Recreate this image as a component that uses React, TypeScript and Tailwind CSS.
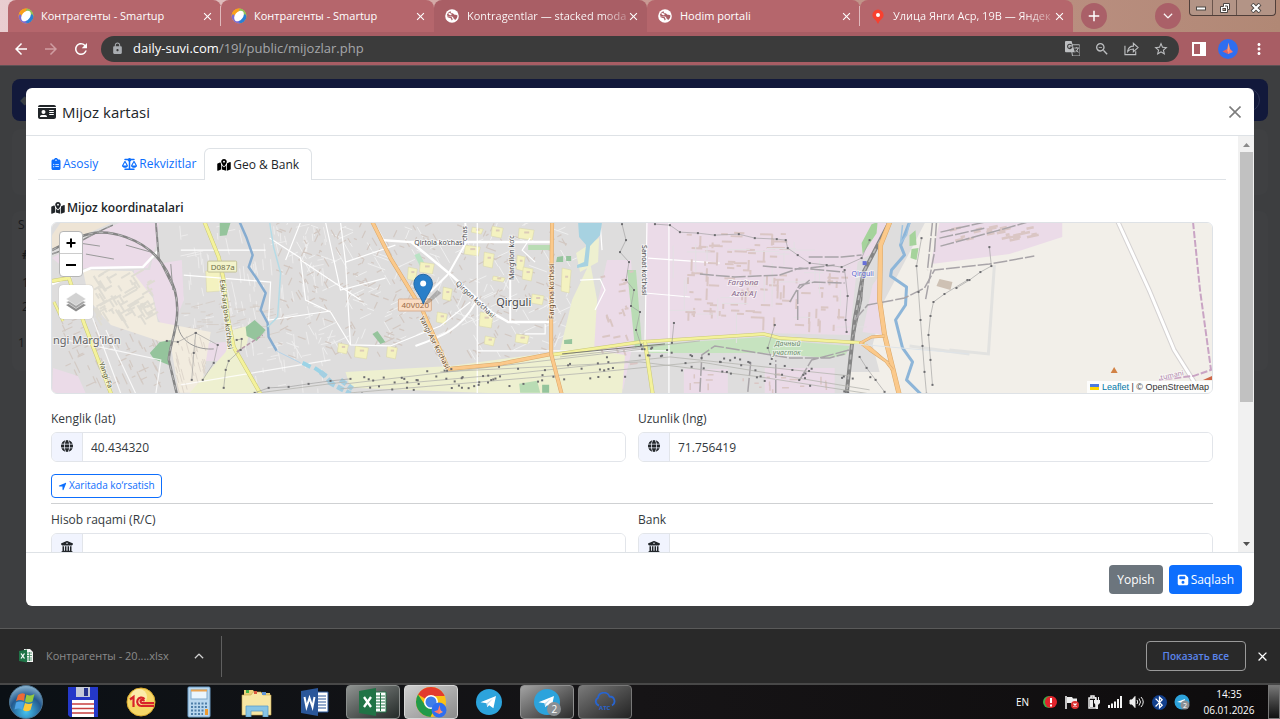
import React from "react";
import {
  FaIdCard, FaClipboardList, FaScaleBalanced, FaMapLocationDot, FaGlobe,
  FaLocationArrow, FaBuildingColumns, FaFloppyDisk,
} from "react-icons/fa6";
import { MdStarBorder, MdZoomOut, MdLock, MdArrowBack, MdArrowForward, MdRefresh, MdMoreVert, MdClose, MdAdd, MdBluetooth } from "react-icons/md";
import { HiChevronDown, HiChevronUp } from "react-icons/hi2";

/* ---------- browser chrome ---------- */

function SmartupIcon() {
  return (
    <svg viewBox="0 0 16 16" className="size-4 shrink-0" aria-hidden="true">
      <circle cx="8" cy="8" r="7.5" fill="#f3a43a" />
      <path d="M8 .5A7.5 7.5 0 0 0 .5 8l4 4L10 1z" fill="#f9a01b" />
      <path d="M9 .6a7.5 7.5 0 0 1 6.5 7.4l-3 2L8 2z" fill="#8fc25a" />
      <path d="M15.5 8A7.5 7.5 0 0 1 8 15.500L6 12l8-6z" fill="#2c7fd4" />
      <path d="M.5 8A7.500 7.500 0 0 0 9 15.400L7 11 2 6z" fill="#7d6cd0" />
      <ellipse cx="8" cy="8" rx="4" ry="6" transform="rotate(38 8 8)" fill="#fff" />
    </svg>
  );
}

function EarthIcon() {
  return (
    <svg viewBox="0 0 16 16" className="size-4 shrink-0" aria-hidden="true">
      <circle cx="8" cy="8" r="6.800" fill="#fff" />
      <path d="M6.800 3.200c-.3 1.200.2 1.900 1.500 2 1.400.1 1.300 1.600 2.600 1.500 1.100-.1 1.900.1 2.600.9-.1 2-1 3.600-2.600 4.600-.1-1.100-.6-1.500-1.400-1.600-.1-1.500-1-2.100-2.500-2-1.700.1-3-.3-4.200-1.300.5-2 1.900-3.600 4-4.100z" fill="#a95e65" />
      <path d="M3.500 8.500c1.500 1 2.500.8 3.500 1.200 1 .5.500 1.500 1.300 2.300" fill="none" stroke="#a95e65" strokeWidth="1.300" />
      <path d="M4.800 5.300c.8 1.100 1.700.9 2.700 1.200" fill="none" stroke="#fff" strokeWidth="1.800" />
    </svg>
  );
}

function PinIcon() {
  return (
    <svg viewBox="0 0 16 16" className="size-4 shrink-0" aria-hidden="true">
      <path d="M8 1.500a5.600 5.600 0 0 0-5.600 5.600c0 3.900 4.100 4.500 5.100 8.400h1c1-3.900 5.100-4.500 5.100-8.400A5.600 5.600 0 0 0 8 1.500z" fill="#f8402f" />
      <circle cx="8" cy="7" r="2" fill="#fff" />
    </svg>
  );
}

const tabs = [
  { title: "Контрагенты - Smartup", icon: <SmartupIcon />, active: false, line: true, faded: false },
  { title: "Контрагенты - Smartup", icon: <SmartupIcon />, active: false, line: false, faded: false },
  { title: "Kontragentlar — stacked moda", icon: <EarthIcon />, active: true, line: false, faded: true },
  { title: "Hodim portali", icon: <EarthIcon />, active: false, line: true, faded: false },
  { title: "Улица Янги Аср, 19В — Яндек", icon: <PinIcon />, active: false, line: false, faded: true },
];

function TabStrip() {
  return (
    <div className="flex h-8 shrink-0 items-start bg-linear-to-r from-[#e9cdd0] via-[#c99a94] to-[#b18875] pl-2">
      <div className="flex h-8 min-w-0 flex-1 text-[11px] text-white">
        {tabs.map((t, i) => (
          <div
            key={i}
            className={
              "flex h-8 max-w-[213px] min-w-0 flex-1 items-center rounded-t-lg pl-[10px] " +
              (t.active ? "bg-[#a95e65]" : "bg-[#b5666c]")
            }
          >
            {t.icon}
            <span className="ml-[7px] flex min-w-0 flex-1">
              <span className={"whitespace-nowrap " + (t.faded ? "bg-linear-to-r from-white from-85% to-white/30 bg-clip-text text-transparent" : "")}>{t.title}</span>
            </span>
            <button aria-label="Закрыть вкладку" className="flex size-4 items-center justify-center">
              <MdClose className="size-[13px]" />
            </button>
            <span className={"ml-[5px] h-5 w-px " + (t.line ? "bg-[#e0b9bc]" : "bg-transparent")} />
          </div>
        ))}
        <button aria-label="Новая вкладка" className="mt-[3px] ml-2 flex size-[26px] shrink-0 items-center justify-center rounded-full bg-[#aa6068]">
          <MdAdd className="size-[18px]" />
        </button>
      </div>
      <div className="flex h-8 items-start pr-1 text-white">
        <button aria-label="Поиск вкладок" className="mt-[3px] mr-2 flex size-[26px] items-center justify-center rounded-full bg-[#aa6068]">
          <HiChevronDown className="size-3" strokeWidth={1} />
        </button>
        <div className="flex h-4 rounded-b border border-t-0 border-[#503f3a] bg-[#b39486]">
          <button aria-label="Свернуть" className="flex w-[23px] items-center justify-center border-r border-[#6a544c]">
            <svg viewBox="0 0 12 10" className="h-[10px] w-3"><rect x="1.500" y="4" width="9" height="3" fill="#fff" stroke="#4b4643" /></svg>
          </button>
          <button aria-label="Развернуть" className="flex w-6 items-center justify-center border-r border-[#6a544c]">
            <svg viewBox="0 0 12 12" className="size-3" fill="none">
              <path d="M4.500 1.500h6v6h-2v3h-7v-6h3z" fill="#fff" stroke="#4b4643" /><rect x="4" y="6.500" width="2.500" height="2" fill="#b39486" stroke="#4b4643" /><path d="M6 4h2.500v3" stroke="#4b4643" />
            </svg>
          </button>
          <button aria-label="Закрыть" className="flex w-[38px] items-center justify-center">
            <svg viewBox="0 0 12 10" className="h-[10px] w-3" fill="none"><path d="M2 1l8 8M10 1l-8 8" stroke="#4b4643" strokeWidth="4" /><path d="M2.500 1.500l7 7M9.500 1.500l-7 7" stroke="#fff" strokeWidth="2.200" /></svg>
          </button>
        </div>
      </div>
    </div>
  );
}

function Toolbar() {
  return (
    <div className="flex h-[34px] shrink-0 items-center border-b border-[#5e5255] bg-[#a85d64] pl-3 text-white">
      <div className="flex items-center gap-3">
        <button aria-label="Назад"><MdArrowBack className="size-[18px]" /></button>
        <button aria-label="Вперёд" className="text-[#cf9da1]"><MdArrowForward className="size-[18px]" /></button>
        <button aria-label="Обновить"><MdRefresh className="size-[18px]" /></button>
      </div>
      <div className="ml-[11px] flex h-[26px] min-w-0 flex-1 items-center rounded-full bg-[#3b3b3b] px-[10px]">
        <MdLock className="size-[13px] shrink-0 text-[#a9adb1]" />
        <div className="ml-[9px] flex-1 truncate text-[13px] text-[#a5a7aa]">
          <span className="text-white">daily-suvi.com</span>/19l/public/mijozlar.php
        </div>
        <div className="flex items-center gap-[14px] text-[#bdbfc1]">
          <button aria-label="Перевести">
            <svg viewBox="0 0 16 16" className="size-[15px]">
              <path d="M6 4h9a1 1 0 0 1 1 1v10a1 1 0 0 1-1 1H8z" fill="none" stroke="currentColor" />
              <path d="M1 0h6l3.500 12H1a1 1 0 0 1-1-1V1a1 1 0 0 1 1-1z" fill="currentColor" />
              <path d="M7 4.500a2.300 2.300 0 1 0 .3 2H5" fill="none" stroke="#3b3b3b" strokeWidth="1.200" />
              <path d="M10 7.500h5M12.500 6.500v1M14 7.500c-.5 2-1.500 3.500-3 4.500M11.500 9.500c.8 1.200 1.700 2 3 2.500" fill="none" stroke="currentColor" />
            </svg>
          </button>
          <button aria-label="Масштаб"><MdZoomOut className="size-4" /></button>
          <button aria-label="Поделиться">
            <svg viewBox="0 0 16 16" className="size-[15px]" fill="none" stroke="currentColor" strokeWidth="1.200">
              <path d="M1 5v9.500h11.500V11" /><path d="M4 11c.5-4 2.500-5.500 6-5.500V2.500L15 7l-5 4.500v-3C7.500 8.500 5.500 9 4 11z" />
            </svg>
          </button>
          <button aria-label="Закладка"><MdStarBorder className="size-4" /></button>
        </div>
      </div>
      <div className="flex items-center gap-3 pr-3 pl-[13px]">
        <button aria-label="Боковая панель">
          <svg viewBox="0 0 14 14" className="size-[14px]"><rect width="14" height="14" fill="#fff" /><rect x="2" y="2" width="6" height="10" fill="#a85d64" /></svg>
        </button>
        <button aria-label="Профиль"><Avatar className="size-5" /></button>
        <button aria-label="Меню"><MdMoreVert className="size-[18px]" /></button>
      </div>
    </div>
  );
}

function Avatar({ className }: { className: string }) {
  return (
    <svg viewBox="0 0 20 20" className={className} aria-hidden="true">
      <circle cx="10" cy="10" r="10" fill="#2f6ef0" />
      <path d="M10.500 3.500l2 9-2 2.500-1.500-3z" fill="#ff9a70" />
      <path d="M10 15L4.500 12.500 9 10z" fill="#e8605a" />
      <path d="M10 15l5-2-3.500-3.500z" fill="#ff7a66" />
    </svg>
  );
}

/* ---------- map ---------- */

function seeded(seed: number) {
  let s = seed;
  return () => {
    s = (s * 16807) % 2147483647;
    return s / 2147483647;
  };
}

function strokes(seed: number, n: number, x: number, y: number, w: number, h: number, angles: number[], len: number) {
  const r = seeded(seed);
  let d = "";
  for (let i = 0; i < n; i++) {
    const a = (angles[Math.floor(r() * angles.length)] * Math.PI) / 180;
    const l = len * (0.4 + r());
    const px = x + r() * w;
    const py = y + r() * h;
    d += `M${px.toFixed(1)} ${py.toFixed(1)}l${(Math.cos(a) * l).toFixed(1)} ${(Math.sin(a) * l).toFixed(1)}`;
  }
  return d;
}

function Pylons({ pts }: { pts: string }) {
  return (
    <g>
      <polyline points={pts} fill="none" stroke="#9b9b9b" strokeWidth=".6" />
      {pts.split(" ").map((p, i) => {
        const [x, y] = p.split(",").map(Number);
        return <rect key={i} x={x - 1} y={y - 1} width="2" height="2" fill="#6d6d70" />;
      })}
    </g>
  );
}

function Rail({ d, w = 2 }: { d: string; w?: number }) {
  return (
    <g fill="none">
      <path d={d} stroke="#858585" strokeWidth={w} />
      <path d={d} stroke="#b9b9b9" strokeWidth={w * 0.4} strokeDasharray="5 5" />
    </g>
  );
}

function Road({ d, w, c, k }: { d: string; w: number; c: string; k: string }) {
  return (
    <g fill="none" strokeLinejoin="round">
      <path d={d} stroke={k} strokeWidth={w + 1} />
      <path d={d} stroke={c} strokeWidth={w} />
    </g>
  );
}

function yardPylons() {
  const r = seeded(4211);
  return Array.from({ length: 120 }, () => {
    const x = 350 + r() * 530;
    const base = x < 640 ? 386 - (x - 350) * 0.08 : 353 + (x - 640) * 0.14;
    return [x, base + r() * 22 - 10];
  });
}

function MapArt() {
  const yellow = { c: "#f4f29b", k: "#c9c878" };
  const orange = { c: "#fbc98b", k: "#d9a769" };
  const blocks: [number, number, number, number][] = [
    [408, 267, 9, 12], [420, 262, 14, 10], [443, 287, 9, 12], [437, 312, 10, 10], [480, 312, 13, 14], [485, 336, 10, 8],
    [516, 334, 13, 8], [355, 346, 13, 11], [338, 343, 10, 9], [387, 346, 10, 11], [465, 245, 15, 9], [484, 252, 10, 14],
    [519, 228, 15, 10], [517, 255, 8, 14], [523, 267, 10, 12], [532, 294, 12, 9], [562, 268, 9, 23], [492, 226, 11, 10],
    [472, 227, 11, 5], [493, 276, 12, 4],
  ];
  return (
    <svg viewBox="51 222 1162 172" preserveAspectRatio="xMidYMid slice" className="h-full w-full" role="img" aria-label="Xarita" fontFamily="Noto Sans, sans-serif">
      <rect x="40" y="210" width="1190" height="200" fill="#f2efe9" />
      <path d="M40 210H932L905 262 885 300 873 345 880 372 850 372 850 400H40z" fill="#dedddd" />

      {/* residential texture */}
      <g fill="none">
        <path d={strokes(11, 150, 178, 224, 150, 165, [-12, 78, 85], 12)} stroke="#edecec" />
        <path d={strokes(7, 170, 285, 224, 300, 130, [20, -68, 60, -25], 15)} stroke="#efefef" />
        <path d={strokes(3, 260, 275, 224, 290, 132, [20, -65, 60, -28], 7)} stroke="#d2c8c2" strokeWidth="1.200" />
        <path d={strokes(5, 80, 60, 320, 100, 70, [65, -25], 9)} stroke="#d3cac4" strokeWidth="1.200" />
        <path d={strokes(9, 50, 180, 300, 90, 40, [0, -15], 9)} stroke="#d6cfca" />
      </g>

      {/* industrial areas */}
      <g fill="#ebdbe8">
        <path d="M51 258L85 238 120 222H158L156 244 147 268 120 267 85 268 68 272z" />
        <path d="M152 258L163 263 181 260 183 300 176 318 176 337 168 338 157 318 148 275z" />
        <path d="M133 270h18v23h-18zM197 344l28-2 3 19h-28zM52 368l25 8 8 18H51z" />
        <path d="M607 260h24l5 70-13 60-28-32-5-22z" />
        <path d="M646 222H892L878 250 858 262 850 335 765 333 720 337 646 344z" />
        <path d="M684 369h44v25h-44zM765 368h70v26h-70z" />
        <path d="M873 285l-10 47 22 3-5-60z" />
        <path d="M932 260L940 222H1063V237L1010 254 932 264z" />
      </g>
      <path d="M82 270L131 271 152 298 157 322 210 332 200 393H178L170 345 110 325 88 300z" fill="#f2ecdf" />
      <path d={strokes(21, 70, 92, 275, 55, 45, [58, -30], 11)} stroke="#dfdcd3" strokeWidth="2" fill="none" />
      <path d={strokes(22, 35, 175, 335, 30, 52, [75], 10)} stroke="#ded6cc" fill="none" />
      <path d="M51 235L60 222H112L85 234 51 249z" fill="#eee4d5" />

      {/* fields and greenery */}
      <g fill="#eef0d0">
        <path d="M188 394L225 352 232 330 250 325 246 345 236 352 262 394z" />
        <path d="M345 372L450 366 555 352 600 351 625 355 622 394 510 394 350 388z" />
        <path d="M576 253L599 238 598 262 580 272zM572 300L590 262 597 300 594 350 560 350z" />
      </g>
      <g fill="#b9dcb4">
        <path d="M627 270l9 0 6 75-7 3z" />
        <path d="M642 345L764 337 800 342 850 346 846 355 830 358 764 353 645 353z" fill="#c6e3bf" />
        <path d="M528 245h22v5h-22zM519 384l18-3 3 12h-20z" />
      </g>
      <g fill="#95c49c">
        <path d="M219 222h11l-4 13-7 1zM245 327l9-7 11 10-9 11-10-5zM149 353l10-11 11-2-2 25-15-6z" />
        <path d="M372 334l5-3 8 11-5 2zM494 229l7-1v7l-7 1zM557 257l6-1v6h-7zM566 256h5v5h-5zM542 385h7v8h-7zM564 340l8-1v5h-8z" />
        <path d="M872 224L878 222 877 233 863 254 862 243zM910 235l6-5 1 15-7 1zM912 249l7-1-2 12-6-2z" fill="#a5d39b" />
      </g>
      <path d="M414 255l5-2 8 16-5 2z" fill="#b9e3c4" />
      <g fill="#f4f2c0" stroke="#d6d4a8" strokeWidth=".5">
        {blocks.map(([x, y, w, h], i) => (
          <path key={i} d={`M${x} ${y}l${w} 2l-2 ${h}l${-w + 1} -2z`} />
        ))}
        <path d="M205 271h14l1 20-14 1z" />
      </g>
      <g fill="#dccbb9">
        {blocks.map(([x, y, w, h], i) => (
          <rect key={i} x={x + w / 3} y={y + h / 3} width={w / 3} height="2" />
        ))}
      </g>

      {/* streets */}
      <g fill="none" stroke="#fff" strokeWidth="1.200">
        <path d="M51 284L90 268 142 267 158 250" strokeWidth="2.500" />
        <path d="M269 238L300 258 305 300 330 312 350 345 390 346 440 326 470 302" />
        <path d="M380 240L411 242 452 276 491 312 508 322 549 322M411 242H550" strokeWidth="2.500" />
        <path d="M448 274L430 292M475 303C460 330 440 337 415 346" strokeWidth="2" />
        <path d="M510 280V322M465 222L466 242 448 274" strokeWidth="2" />
        <path d="M477 351H670M477 222V394" />
        <path d="M647 222L645 345M669 222V394M648 258L720 263M645 293L690 297" />
        <path d="M340 222L345 262 395 245M345 262L350 345M300 260L360 300M180 250H265M183 275L270 282 268 320 330 311M300 222L285 260M600 222L602 250" />
        <path d="M85 300L120 394M65 340L160 360 155 394M105 330L135 394M180 385L330 360" opacity=".8" />
        <path d="M580 280L600 279 605 290 595 310M325 222L340 290 385 278" />
        <path d="M530 238L522 250 535 262M545 324V334H525" />
      </g>

      {/* waterways */}
      <g fill="none" strokeLinejoin="round">
        <path d="M239 222L246 238 252 255 248 267 257 280 265 293 260 310 267 323 268 337 276 351" stroke="#86acd0" strokeWidth="2.500" />
        <path d="M276 351L300 363" stroke="#b5d3e8" />
        <path d="M269 222L273 247 280 273 277 317 267 327" stroke="#b5dbe6" strokeWidth="1.500" />
        <path d="M302 363l8 4M314 368l12 8" stroke="#9bd3e6" strokeWidth="4" />
        <path d="M320 372l12 12M328 382l22 12M340 380l12 9" stroke="#a4cfe2" strokeWidth="5" strokeDasharray="7 3" />
        <path d="M910 222L901 245 905 255 892 270 891 276 907 287 906 305 896 320 903 348 913 362 907 380 921 394" stroke="#8db5d8" strokeWidth="3" />
        <path d="M903 225l-2 18 6-8 3-12" stroke="#9fc3e0" strokeWidth="1.500" />
      </g>
      <path d="M578 222H602L600 235 590 246 588 266 577 268 577 265 584 262 586 245 579 237z" fill="#a7d2e1" />

      {/* industrial buildings */}
      <g fill="none" stroke="#dac6c4">
        <path d={strokes(31, 90, 685, 232, 100, 90, [2, 2, 92], 10)} strokeWidth="2" />
        <path d={strokes(33, 26, 795, 270, 50, 55, [2, 92], 9)} strokeWidth="2" />
        <path d={strokes(35, 26, 945, 227, 100, 14, [-12], 9)} strokeWidth="2.500" />
        <path d={strokes(36, 20, 600, 265, 32, 100, [70, -10], 6)} strokeWidth="2" />
        <path d={strokes(38, 22, 690, 372, 140, 18, [0, 90], 6)} strokeWidth="1.500" />
      </g>
      <path d="M940 279l13 3-2 8-14-4z" fill="#cec1b4" />
      <path d={strokes(37, 30, 650, 230, 195, 100, [0, 90], 24)} fill="none" stroke="#e3e0e3" />

      {/* railways */}
      <Rail d="M51 250C78 236 95 226 125 237 150 246 165 262 174 290 182 320 168 345 168 360L176 394" w={2.5} />
      <Rail d="M155 222L158 258 174 290" />
      <Rail d="M51 254C70 248 86 236 112 225" w={1.5} />
      <path d="M65 241l34 5M85 254l28 5M125 245l25 7M170 264l2 26M177 325C180 345 200 350 213 349" stroke="#999" fill="none" />
      <Rail d="M890 222L864 272 855 320 847 394" w={4} />
      <Rail d="M864 272L862 300 852 345" w={1.5} />
      <g fill="none" stroke="#a8a4a8" strokeWidth="1.500" strokeDasharray="14 2">
        <path d="M700 274L735 277 780 275 800 268 845 272M763 266L800 269 835 265M809 257H842L862 255M790 302L800 285 815 282 845 283M798 320L798 290 810 280" />
        <path d="M700 392L702 355 715 346 790 358 830 358 845 354M748 392L751 362M776 394V360M800 380L812 360 850 350" />
        <path d="M855 320L868 305 905 298 925 288 935 270 990 264 1035 256" />
        <path d="M937 222L935 252 926 300M933 222L928 270M941 232L985 222M940 238L985 228M941 246L1000 230 1028 222" />
      </g>
      <g fill="none" stroke="#b5b5b0" strokeWidth=".8">
        <path d="M345 384L500 366 645 349M340 389L510 374 670 357 850 376M350 393L600 372 700 362 870 390M440 372L640 362 760 377 870 394M250 394L345 382M560 357L700 341" />
      </g>

      {/* main roads */}
      <Road d="M203 220L218 257 223 280 227 317 233 347 261 396" w={3} {...yellow} />
      <Road d="M51 281L68 278 83 323 111 396" w={3} {...yellow} />
      <Road d="M53 302L62 321" w={2} {...yellow} />
      <Road d="M550 355L640 342 764 334 780 338 865 343" w={2.5} {...yellow} />
      <Road d="M645 342L653 396" w={3} {...yellow} />
      <Road d="M371 220L390 258 422 310 448 369" w={3} {...orange} />
      <Road d="M448 369L500 364 551 354" w={3} {...orange} />
      <Road d="M552 220L551 300 551 354 562 396" w={3} {...orange} />
      <Road d="M891 220L881 245 880 300 885 335 900 396" w={4} {...orange} />
      <Road d="M885 336L872 337 861 343 870 350 886 361 893 370M866 345C875 350 880 358 889 363" w={2} {...orange} />
      <path d="M562 354L665 344" stroke="#7b7b76" fill="none" />
      <path d="M236 352L262 335" stroke="#b79aaa" strokeWidth="1.500" strokeDasharray="4 2" fill="none" />

      {/* rural tracks and borders on the east side */}
      <g fill="none">
        <path d="M1118 220L1150 290 1175 350 1197 385" stroke="#d5d2d2" strokeWidth="5" />
        <path d="M1118 220L1150 290 1175 350 1197 385" stroke="#fff" strokeWidth="3" />
        <path d="M995 265L989 354 950 350M910 346L970 354" stroke="#e2e2e0" strokeWidth="3" />
        <path d="M1194 222L1201 290 1212 370 1195 376 1160 380" stroke="#c9a4c4" strokeWidth="2" strokeDasharray="7 2" />
        <path d="M855 344L970 354" stroke="#dfe4e8" />
      </g>
      <path d="M1204 380l9-4v4z" fill="#cf6748" />
      <path d="M1115 367l3.500 6h-7z" fill="#d28245" />

      {/* power lines */}
      <Pylons pts="655,224 670,225 680,232 698,233 715,235 739,234 755,238 777,239 786,240 788,248 798,255 810,263 827,265 842,267 862,258 870,240" />
      <Pylons pts="922,238 917,266 919,292 921,320 923,346 925,372 927,394" />
      <Pylons pts="968,280 945,294 934,302 931,316 929,335 931,360 933,385" />
      <Pylons pts="990,247 992,266 981,272 970,280 957,288" />
      <Pylons pts="195,333 193,353 191,380" />
      <Pylons pts="166,341 177,342 195,333 217,345 213,363 202,380" />
      <Pylons pts="236,340 241,339 240,350 228,361 225,370 223,388" />
      <Pylons pts="254,393 268,388 288,387 308,384 330,381 350,379" />
      <Pylons pts="622,224 626,240 620,252 629,262 626,280 634,290 631,306 640,312 636,330 641,345" />
      <Pylons pts="775,325 768,348 772,359" />
      <Pylons pts="674,323 672,343" />
      <Pylons pts="860,357 867,368 876,380 885,392" />
      <Pylons pts="845,270 848,296 846,320 847,332" />
      <g fill="#6d6d70">
        {yardPylons().map(([x, y], i) => (
          <rect key={i} x={x} y={y} width="2" height="2" />
        ))}
      </g>

      {/* labels */}
      <rect x="207" y="261" width="29" height="11" rx="1" fill="#f3f3cb" stroke="#c4c399" />
      <text x="210" y="270" fontSize="8" fill="#6f6f4a">D087a</text>
      <rect x="398" y="299" width="33" height="12" rx="1" fill="#f9dcc3" stroke="#dab193" />
      <text x="401" y="308" fontSize="8" fill="#9b6b45">40V020</text>
      <g fill="#47474a" stroke="#fff" strokeWidth="2" paintOrder="stroke" strokeOpacity=".5">
        <text x="52" y="344" fontSize="11" fill="#626264">ngi Marg’ilon</text>
        <text x="496" y="306" fontSize="11">Qirguli</text>
        <text x="414" y="245" fontSize="7">Qirtola ko‘chasi</text>
        <text transform="translate(455 284) rotate(43)" fontSize="7">Qirgon ko‘chasi</text>
        <text transform="translate(514 280) rotate(-90)" fontSize="7">Marg‘ilon ko‘c</text>
        <text transform="translate(467 241) rotate(-90)" fontSize="7">chas</text>
        <text transform="translate(554 319) rotate(-90)" fontSize="7" fill="#654a2c">Farg‘ona ko‘chasi</text>
        <text transform="translate(419 318) rotate(63)" fontSize="7" fill="#654a2c">Yangi Asr ko‘chasi</text>
        <text transform="translate(219 280) rotate(83)" fontSize="7" fill="#55552f">Eski Farg‘ona ko‘chasi</text>
        <text transform="translate(98 363) rotate(70)" fontSize="7" fill="#55552f">Yangi Fa</text>
        <text transform="translate(642 245) rotate(90)" fontSize="7">Sanoat ko‘chasi</text>
        <text x="728" y="285" fontSize="8" fill="#87688a" fontStyle="italic">Farg‘ona</text>
        <text x="732" y="296" fontSize="8" fill="#87688a" fontStyle="italic">Azot AJ</text>
        <text x="852" y="276" fontSize="7" fill="#5a64cf">Qirguli</text>
        <text x="775" y="346" fontSize="7" fill="#6e8a6c" fontStyle="italic">Дачный</text>
        <text x="773" y="355" fontSize="7" fill="#6e8a6c" fontStyle="italic">участок</text>
        <text transform="translate(1162 380) rotate(-12)" fontSize="7" fill="#b28aae">tumani</text>
      </g>
      <rect x="863" y="261" width="4" height="4" fill="#6670d8" />

      {/* marker */}
      <path d="M423 304l14-14 4 3-12 10z" fill="#000" opacity=".22" />
      <path d="M423 304C420 295 413.500 290 413.500 283.500a9.300 9.300 0 0 1 18.600 0C432.100 290 426 295 423 304z" fill="#2a7fc9" stroke="#2468a4" />
      <circle cx="422.800" cy="283.500" r="3" fill="#fff" />
    </svg>
  );
}

function MapPanel() {
  return (
    <div className="relative mt-[6px] h-[172px] overflow-hidden rounded-md border border-[#dee2e6]">
      <MapArt />
      <div className="absolute top-2 left-[7px] flex flex-col rounded-sm border border-[#b6b6b6] bg-white">
        <button aria-label="Kattalashtirish" className="flex size-[22px] items-center justify-center border-b border-[#ccc] text-black">
          <svg viewBox="0 0 10 10" className="size-[10px]"><path d="M5 .5v9M.5 5h9" stroke="currentColor" strokeWidth="2" /></svg>
        </button>
        <button aria-label="Kichiklashtirish" className="flex size-[22px] items-center justify-center text-black">
          <svg viewBox="0 0 10 10" className="size-[10px]"><path d="M0 5h10" stroke="currentColor" strokeWidth="2" /></svg>
        </button>
      </div>
      <button aria-label="Qatlamlar" className="absolute top-[62px] left-[7px] flex size-[34px] items-center justify-center rounded bg-white shadow-[0_0_1px_#999]">
        <svg viewBox="0 0 20 20" className="size-5">
          <path d="M0 13l10-4 10 4-10 6.500z" fill="#8d8d8d" />
          <path d="M0 10l10-4 10 4-10 6.500z" fill="#a5a5a5" stroke="#fff" strokeWidth=".5" />
          <path d="M0 7l10-6.500L20 7l-10 6.500z" fill="#d2d2d2" stroke="#fff" strokeWidth=".5" />
        </svg>
      </button>
      <div className="absolute right-0 bottom-0 flex h-3 items-center bg-white/85 px-[3px] font-['Liberation_Sans',sans-serif] text-[9px] text-[#333]">
        <svg viewBox="0 0 9 6" className="mr-[3px] h-[6px] w-[9px]"><path fill="#4c7be1" d="M0 0h9v3H0z" /><path fill="#ffd500" d="M0 3h9v3H0z" /></svg>
        <a href="#leaflet" className="text-[#0078a8]">Leaflet</a>
        <span className="whitespace-pre"> | © OpenStreetMap</span>
      </div>
    </div>
  );
}

/* ---------- modal ---------- */

function Field({ id, label, icon, value }: { id: string; label: string; icon: React.ReactNode; value: string }) {
  return (
    <div className="min-w-0 flex-1">
      <label htmlFor={id} className="block h-[21px] leading-4 text-[#343a40]">{label}</label>
      <div className="flex h-[30px] overflow-hidden rounded-md border border-[#e2e5ea]">
        <span className="flex w-[31px] shrink-0 items-start justify-center border-r border-[#e2e5ea] bg-[#f1f4fe] pt-[7px] text-[#212529]">{icon}</span>
        <input id={id} defaultValue={value} className="min-w-0 flex-1 bg-white px-2 pt-[2px] text-[#343a40] outline-none" />
      </div>
    </div>
  );
}

function Modal() {
  return (
    <section role="dialog" aria-label="Mijoz kartasi" className="z-10 mx-[26px] my-[22px] flex min-h-0 flex-col overflow-hidden rounded-md bg-white text-xs text-[#212529] [grid-area:1/1]">
      <header className="flex h-12 shrink-0 items-center border-b border-[#dee2e6] px-3">
        <FaIdCard className="size-[18px]" />
        <h1 className="ml-[6px] flex-1 text-[15px]">Mijoz kartasi</h1>
        <button aria-label="Yopish" className="flex size-[14px] items-center justify-center text-[#7d7d7d]">
          <svg viewBox="0 0 12 12" className="size-3"><path d="M.5.5l11 11M11.500.5l-11 11" stroke="currentColor" strokeWidth="1.600" /></svg>
        </button>
      </header>
      <div className="flex min-h-0 flex-1">
        <div className="min-w-0 flex-1 overflow-hidden px-3 pt-3">
          <div role="tablist" className="flex h-8 border-b border-[#dee2e6] text-[#0d6efd]">
            <button role="tab" className="flex items-center gap-[2px] pr-3 pl-[13px]"><FaClipboardList className="h-3 w-[10px]" />Asosiy</button>
            <button role="tab" className="flex items-center gap-[2px] pr-2 pl-3"><FaScaleBalanced className="h-3 w-[15px]" />Rekvizitlar</button>
            <button role="tab" aria-selected="true" className="-mb-px flex items-center gap-[2px] rounded-t-md border border-b-0 border-[#dee2e6] bg-white px-3 text-[#212529]">
              <FaMapLocationDot className="h-3 w-[14px] text-black" />Geo &amp; Bank
            </button>
          </div>
          <div className="px-[13px] pt-[19px]">
            <h2 className="flex h-[17px] items-center gap-[2px] font-semibold"><FaMapLocationDot className="h-3 w-[14px]" />Mijoz koordinatalari</h2>
            <MapPanel />
            <div className="mt-[17px] flex gap-3">
              <Field id="lat" label="Kenglik (lat)" icon={<FaGlobe className="size-3" />} value="40.434320" />
              <Field id="lng" label="Uzunlik (lng)" icon={<FaGlobe className="size-3" />} value="71.756419" />
            </div>
            <button className="mt-3 flex h-6 items-center gap-[2px] rounded border border-[#0d6efd] px-[6px] text-[10px] text-[#0d6efd]">
              <FaLocationArrow className="size-[9px]" />Xaritada ko‘rsatish
            </button>
            <hr className="mt-[5px] border-[#cfd1d3]" />
            <div className="mt-2 flex gap-3">
              <Field id="account" label="Hisob raqami (R/C)" icon={<FaBuildingColumns className="size-3" />} value="" />
              <Field id="bank" label="Bank" icon={<FaBuildingColumns className="size-3" />} value="" />
            </div>
          </div>
        </div>
        <div aria-hidden="true" className="flex w-4 shrink-0 flex-col items-center bg-[#f1f1f1]">
          <svg viewBox="0 0 15 16" className="h-4 w-[15px]"><path d="M7.500 7l3.500 4H4z" fill="#8a8a8a" /></svg>
          <div className="w-[13px] flex-[65] bg-[#c1c1c1]" />
          <div className="flex-[35]" />
          <svg viewBox="0 0 15 16" className="h-4 w-[15px]"><path d="M7.500 10L4 6h7z" fill="#505050" /></svg>
        </div>
      </div>
      <footer className="flex h-[54px] shrink-0 items-center justify-end gap-[6px] border-t border-[#dee2e6] px-3 text-white">
        <button className="h-[29px] rounded bg-[#6c757d] px-2">Yopish</button>
        <button className="flex h-[29px] items-center gap-[2px] rounded bg-[#0d6efd] px-2"><FaFloppyDisk className="size-3" />Saqlash</button>
      </footer>
    </section>
  );
}

function Backdrop() {
  return (
    <div aria-hidden="true" className="min-w-0 overflow-hidden bg-[#3d3e40] px-3 pt-[13px] text-xs text-[#191a1c] [grid-area:1/1]">
      <div className="flex h-[42px] items-center justify-between rounded-lg bg-[#12193b] px-2 text-[#3a3e44]">
        <span>◆</span>
        <span className="h-6 w-16 rounded-full border border-[#2c3355]" />
      </div>
      <div className="mt-2 h-[66px] rounded-lg bg-[#3f4042]" />
      <div className="mt-4 h-[160px] rounded-lg bg-[#3f4042] px-[6px] pt-1">
        <p className="h-[30px] leading-5">S</p>
        <p className="h-7 pl-1 leading-5 font-bold">#</p>
        <p className="h-6 pl-1 leading-5">1</p>
        <p className="h-9 pl-1 leading-5">2</p>
        <p className="leading-5">1</p>
      </div>
    </div>
  );
}

/* ---------- downloads shelf ---------- */

function DownloadShelf() {
  return (
    <div className="flex h-[55px] shrink-0 items-center border-t border-[#5a5a5a] bg-[#292929] pr-[10px] pl-[18px]">
      <svg viewBox="0 0 16 16" className="size-4 shrink-0" aria-hidden="true">
        <path d="M6 1h6l3 3v10H6z" fill="#f4f4f4" /><path d="M9 5h5M9 7.500h5M9 10h5M9 12h5M11.500 4v9" stroke="#3b8a5e" strokeWidth=".8" />
        <path d="M1 3l8-1.500v13L1 13z" fill="#1f7246" /><path d="M3 5.500l3.500 5M6.500 5.500L3 10.500" stroke="#fff" strokeWidth="1.300" />
      </svg>
      <span className="ml-3 text-[11px] text-[#8b8b8b]">Контрагенты - 20....xlsx</span>
      <button aria-label="Действия с файлом" className="ml-6 text-[#ddd]"><HiChevronUp className="size-3" strokeWidth={1} /></button>
      <span className="ml-4 h-[41px] w-px bg-[#5f5f5f]" />
      <span className="flex-1" />
      <button className="h-[30px] rounded border border-[#9a9a9a] px-4 text-[10px] font-semibold text-[#5b85ec]">Показать все</button>
      <button aria-label="Закрыть" className="ml-[9px] text-white"><MdClose className="size-[15px]" /></button>
    </div>
  );
}

/* ---------- taskbar ---------- */

function Telegram({ badge = false }: { badge?: boolean }) {
  return (
    <svg viewBox="0 0 28 28" className="size-7" aria-hidden="true">
      <circle cx="14" cy="14" r="13" fill="#2ca3dc" />
      <path d="M5.500 14.300L21 8l-2.600 12.200-4.200-3-2 2.100-.6-4z" fill="#fff" /><path d="M11.600 15.200l6.500-4.600-5 5.400-.9 3.300z" fill="#b9d9ec" />
      {badge && <><circle cx="21" cy="21" r="7" fill="#8b8f93" /><text x="18.500" y="25" fontSize="10" fill="#fff">2</text></>}
    </svg>
  );
}

const apps: { name: string; box?: string; icon: React.ReactNode }[] = [
  { name: "Total Commander", icon: (
    <svg viewBox="0 0 32 32" className="size-8"><path d="M1 1h30v30H3l-2-2z" fill="#2438c8" /><path d="M9 1h14v10H9z" fill="#c5cad8" /><path d="M17 2h4v8h-4z" fill="#26348e" /><path d="M5 14h22v17H5z" fill="#fff" /><path d="M5 18h22M5 22.500h22M5 27h22" stroke="#c74040" strokeWidth="1.500" /></svg>) },
  { name: "1C", icon: (
    <svg viewBox="0 0 30 30" className="size-[30px]"><circle cx="15" cy="15" r="14" fill="#f6d768" stroke="#d9a92e" /><circle cx="13" cy="10" r="8" fill="#fcebaa" /><path d="M4 12.500l3.500-2.500v10M18.500 12a4.200 4.200 0 1 0-3 7H28M18 14.300a1.700 1.700 0 1 0-1.500 1.900H28" fill="none" stroke="#d8232a" strokeWidth="2.200" /></svg>) },
  { name: "Калькулятор", icon: (
    <svg viewBox="0 0 24 32" className="h-8 w-6"><rect x="1" y="1" width="22" height="30" rx="1" fill="#b9d7ee" stroke="#6c9cc4" /><rect x="4" y="4" width="16" height="9" fill="#eaf5fd" stroke="#7fa9cc" /><path d="M4 4.500h16" stroke="#e7a353" strokeWidth="2" /><path d="M4 17.500h16M4 21h16M4 24.500h16M4 28h12" stroke="#4f7ea8" strokeWidth="2" strokeDasharray="2 1.500" /><path d="M18 23h3v6h-3z" fill="#ee9a2e" /></svg>) },
  { name: "Проводник", icon: (
    <svg viewBox="0 0 32 30" className="h-[30px] w-8"><path d="M3 3h9l2 3h15v22H3z" fill="#e9cf78" /><path d="M1 8h9l2-3h8l2 3h8v20H1z" fill="#f7e6a4" stroke="#c9a94e" strokeWidth=".6" /><path d="M5 3h3v3H5z" fill="#46b14c" /><path d="M13 4h3v3h-3z" fill="#d95740" /><path d="M21 5h4v3h-4z" fill="#5f94d6" /><path d="M5 30V19h22v11h-5v-6H10v6z" fill="#87c5e6" stroke="#5a9cc9" strokeWidth=".8" /></svg>) },
  { name: "Word", icon: (
    <svg viewBox="0 0 30 28" className="h-7 w-[30px]"><path d="M14 4h14v20H14z" fill="#fff" stroke="#2b579a" /><path d="M18 8h8M18 11h8M18 14h8M18 17h8M18 20h8" stroke="#2b579a" /><path d="M1 3l17-3v28L1 25z" fill="#2b579a" /><path d="M4.500 9l2 10 3-9 3 9 2-10" fill="none" stroke="#fff" strokeWidth="2" /></svg>) },
  { name: "Excel", box: "border-[#8b8f8d] from-[#8f9391] to-[#252b29]", icon: (
    <svg viewBox="0 0 30 28" className="h-7 w-[30px]"><path d="M14 4h14v20H14z" fill="#fff" stroke="#217346" /><path d="M18 8h9M18 11h9M18 14h9M18 17h9M18 20h9M22.500 5v18" stroke="#217346" /><path d="M1 3l17-3v28L1 25z" fill="#217346" /><path d="M6 9l7 10M13 9L6 19" fill="none" stroke="#fff" strokeWidth="2.300" /></svg>) },
  { name: "Chrome", box: "border-[#d8d8d8] from-[#d0d0d0] to-[#8b8b8b]", icon: (
    <svg viewBox="0 0 32 32" className="size-8"><circle cx="16" cy="16" r="15" fill="#fbc116" /><path d="M16 16L3 8.500A15 15 0 0 1 29 8.500L29.500 10H16z" fill="#e33b2e" /><path d="M3 8.500A15 15 0 0 0 15.500 31L21 19 10 19z" fill="#229a4a" /><circle cx="16" cy="16" r="7" fill="#fff" /><circle cx="16" cy="16" r="5.500" fill="#3f7ee8" /><circle cx="24" cy="24" r="7.500" fill="#2f6ef0" /><path d="M24.500 19l1.500 7-2 2-5-2.500 4-1.500z" fill="#ff7766" /><path d="M24 28l4-2-3-2z" fill="#ff9a70" /></svg>) },
  { name: "Telegram", icon: <Telegram /> },
  { name: "Telegram 2", box: "border-[#8f8f8f] from-[#a3a3a3] to-[#2c2c2c]", icon: <Telegram badge /> },
  { name: "ATC", box: "border-[#777] from-[#7a7a7a] to-[#242424]", icon: (
    <svg viewBox="0 0 24 20" className="h-5 w-6"><path d="M6 13.500a4.200 4.200 0 0 1-1-7.800 6 6 0 0 1 11.500-1.200A4.800 4.800 0 0 1 19 13.500" fill="none" stroke="#2864cf" strokeWidth="1.800" /><text x="6" y="18" fontSize="6" fontWeight="700" fill="#2864cf">ATC</text></svg>) },
];

function Tray() {
  return (
    <div className="flex items-center gap-[7px]">
      <svg viewBox="0 0 14 14" className="size-[14px]"><circle cx="6" cy="7" r="6" fill="#3fae49" /><circle cx="8" cy="7" r="6" fill="#e2242c" /><path d="M8 3v5M8 9.500v2" stroke="#fff" strokeWidth="2" /></svg>
      <svg viewBox="0 0 16 14" className="h-[14px] w-4"><path d="M2 1v13" stroke="#fff" strokeWidth="1.500" /><path d="M3 2h5l1 1.500h4v6H8L7 8H3z" fill="#eee" /><circle cx="11" cy="10" r="4" fill="#dd2f2f" /><path d="M9.500 8.500l3 3M12.500 8.500l-3 3" stroke="#fff" strokeWidth="1.200" /></svg>
      <svg viewBox="0 0 14 14" className="size-[14px]"><path d="M2 3h7v10H2zM4 1h3v2H4z" fill="none" stroke="#eee" strokeWidth="1.500" /><path d="M3 5h3v7H3zM7 5h6v3l-2 2v4H9v-4L7 8zM8 2h1v3H8zM11 2h1v3h-1z" fill="#eee" /></svg>
      <svg viewBox="0 0 14 12" className="h-3 w-[14px]"><path d="M0 9h2v3H0zM3 7.500h2V12H3zM6 5.500h2V12H6zM9 3h2v9H9zM12 0h2v12h-2z" fill="#f2f2f2" /></svg>
      <svg viewBox="0 0 16 14" className="h-[14px] w-4" fill="none" stroke="#eee"><path d="M1 5h2l3-3.500v11L3 9H1z" fill="#eee" /><path d="M8 5q1.500 2 0 4M10 3.500q3 3.500 0 7M12 2q4.500 5 0 10" /></svg>
      <MdBluetooth className="size-[15px] rounded-full bg-[#123f8c] text-white" />
      <svg viewBox="0 0 16 16" className="size-4"><circle cx="8" cy="8" r="7.500" fill="#2ca3dc" /><path d="M3 8l8-3-1 4z" fill="#fff" /><circle cx="11" cy="11" r="4.500" fill="#8b8f93" /><text x="9" y="14" fontSize="7" fill="#fff">2</text></svg>
    </div>
  );
}

function Taskbar() {
  return (
    <div className="flex h-9 shrink-0 items-center gap-1 border-t-2 border-[#484848] bg-linear-to-r from-[#0b1015] via-[#161416] to-[#0e0c0d]">
      <button aria-label="Пуск" className="flex w-[52px] shrink-0 justify-center">
        <svg viewBox="0 0 34 34" className="size-[34px]">
          <defs><radialGradient id="orb" cx=".5" cy=".8" r=".8"><stop offset="0" stopColor="#45c3f0" /><stop offset=".6" stopColor="#23598f" /><stop offset="1" stopColor="#8fb8d2" /></radialGradient></defs>
          <circle cx="17" cy="17" r="16.500" fill="url(#orb)" stroke="#4c7390" />
          <path d="M9 10q4-3 7-1l-1 7q-4-2-8 0z" fill="#ee6a35" /><path d="M17.500 9.500q4 2 8-.5l-2 7.500q-4 2-7.500 0z" fill="#93c840" />
          <path d="M7 17.500q4-2 8 0l-2 7q-3-2-7.500 0z" fill="#4da3e6" /><path d="M16 18q4 2 7.500 0l-2 7q-4 2.500-7.500 0z" fill="#fcc93a" />
        </svg>
      </button>
      {apps.map((a) => (
        <button key={a.name} aria-label={a.name} className={"flex h-[34px] w-[54px] shrink-0 items-center justify-center overflow-hidden rounded-sm " + (a.box ? "border bg-linear-to-br " + a.box : "")}>
          {a.icon}
        </button>
      ))}
      <span className="flex-1" />
      <span className="mr-[10px] text-[10px] text-white">EN</span>
      <Tray />
      <div className="w-[70px] text-center text-[10px] leading-4 text-white">
        <div>14:35</div>
        <div>06.01.2026</div>
      </div>
      <button aria-label="Показать рабочий стол" className="h-[34px] w-3 border border-[#777] bg-linear-to-b from-[#777] to-[#111]" />
    </div>
  );
}

export default function App() {
  return (
    <div className="flex h-screen flex-col overflow-hidden bg-[#3d3e40] font-['Open_Sans','Noto_Sans',sans-serif]">
      <TabStrip />
      <Toolbar />
      <main className="grid min-h-0 flex-1 grid-cols-1 grid-rows-1">
        <Backdrop />
        <Modal />
      </main>
      <DownloadShelf />
      <Taskbar />
    </div>
  );
}
